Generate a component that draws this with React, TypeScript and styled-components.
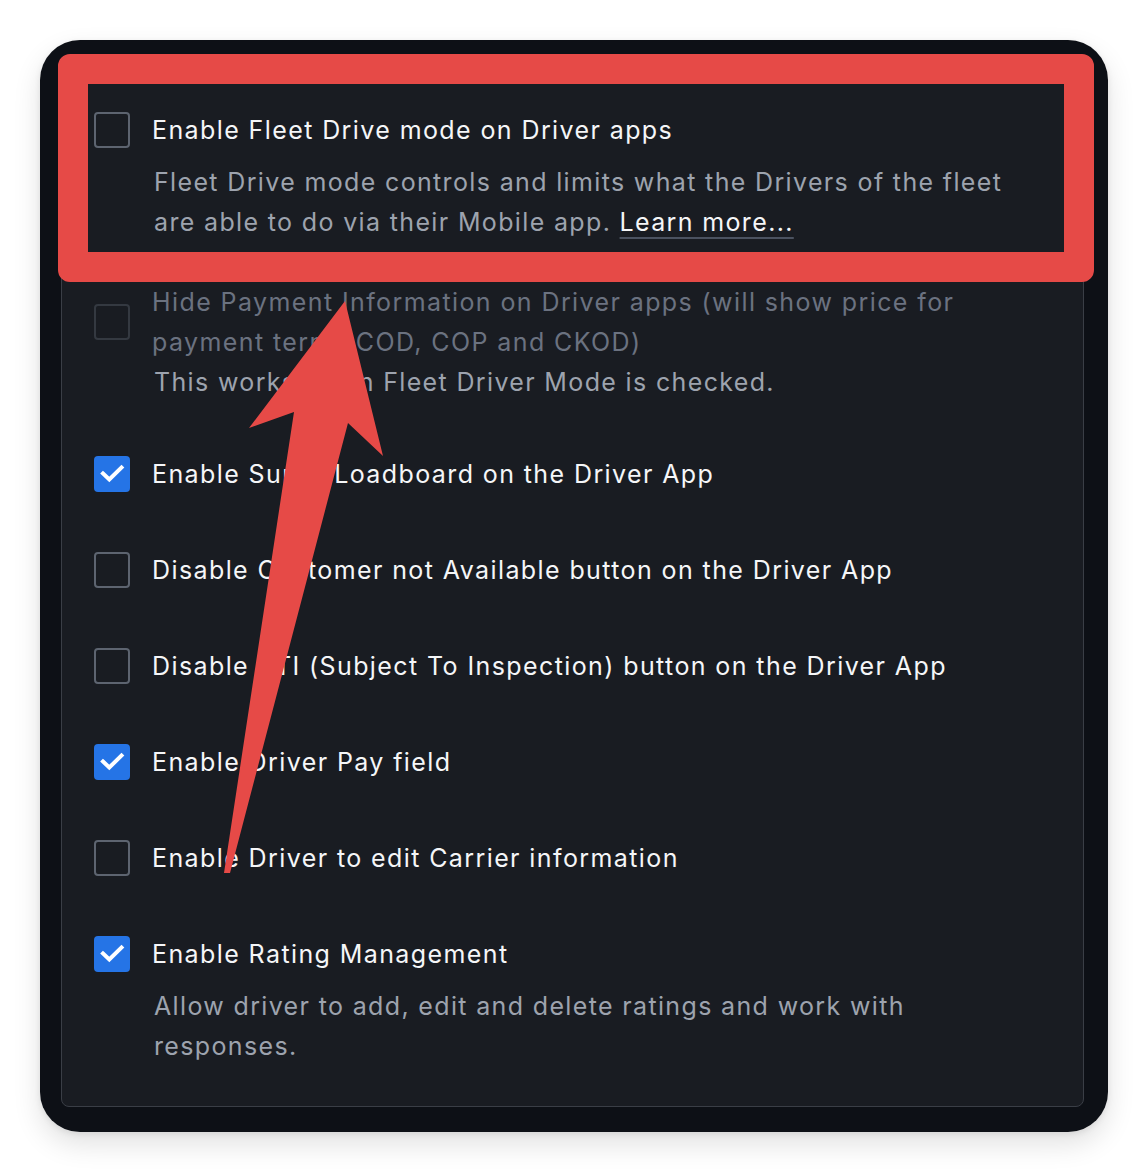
import React from "react"
import styled, { createGlobalStyle } from "styled-components"

const GlobalStyle = createGlobalStyle`
  html, body {
    margin: 0;
    padding: 0;
    background: #ffffff;
  }
  body {
    font-family: Inter, "Noto Sans", "Liberation Sans", sans-serif;
    -webkit-font-smoothing: antialiased;
  }
`

const Page = styled.div`
  padding: 40px 0 40px 40px;
`

const Frame = styled.div`
  position: relative;
  width: 1068px;
  box-sizing: border-box;
  padding: 22px 24px 25px 21px;
  background: #0d1016;
  border-radius: 40px;
  box-shadow: 0 12px 28px rgba(0, 0, 0, 0.12), 0 2px 6px rgba(0, 0, 0, 0.08);
`

const Panel = styled.div`
  display: flex;
  flex-direction: column;
  padding: 47px 32px 40px 32px;
  background: #191c22;
  border: 1px solid #3a3e46;
  border-radius: 8px;
`

const Row = styled.div<{ $gap: number }>`
  display: flex;
  flex-direction: column;
  margin-top: ${(p) => p.$gap}px;
`

const Header = styled.div`
  display: flex;
  align-items: center;
  gap: 22px;
`

const Box = styled.div<{ $checked?: boolean; $disabled?: boolean }>`
  flex-shrink: 0;
  width: 36px;
  height: 36px;
  box-sizing: border-box;
  border-radius: 4px;
  display: flex;
  align-items: center;
  justify-content: center;
  background: ${(p) => (p.$checked ? "#2574e6" : "transparent")};
  border: ${(p) =>
    p.$checked ? "none" : p.$disabled ? "2px solid #343941" : "2px solid #5d6470"};
  svg {
    display: block;
  }
`

const Label = styled.div<{ $disabled?: boolean }>`
  font-size: 25px;
  line-height: 40px;
  letter-spacing: 1.4px;
  color: ${(p) => (p.$disabled ? "#6b7280" : "#f5f6f8")};
  max-width: 830px;
`

const Description = styled.div<{ $gap: number }>`
  margin-top: ${(p) => p.$gap}px;
  padding-left: 60px;
  font-size: 25px;
  line-height: 40px;
  letter-spacing: 1.35px;
  color: #9da3ae;
  max-width: 870px;
`

const LearnMore = styled.a`
  color: #f5f6f8;
  text-decoration: underline;
  text-decoration-color: #4b5260;
  text-decoration-thickness: 2px;
  text-underline-offset: 6px;
`

const Highlight = styled.div`
  position: absolute;
  left: 18px;
  top: 14px;
  width: 1036px;
  height: 228px;
  box-sizing: border-box;
  border: 30px solid #e64a47;
  border-radius: 12px;
  pointer-events: none;
`

const ArrowSvg = styled.svg`
  position: absolute;
  left: 0;
  top: 0;
  pointer-events: none;
`

type Option = {
  label: string
  checked?: boolean
  disabled?: boolean
  description?: React.ReactNode
  descGap?: number
  gap: number
}

const options: Option[] = [
  {
    label: "Enable Fleet Drive mode on Driver apps",
    gap: 0,
    descGap: 12,
    description: (
      <>
        Fleet Drive mode controls and limits what the Drivers of the fleet are able to do via
        their Mobile app. <LearnMore href="#">Learn more...</LearnMore>
      </>
    ),
  },
  {
    label: "Hide Payment Information on Driver apps (will show price for payment terms COD, COP and CKOD)",
    disabled: true,
    gap: 40,
    descGap: 0,
    description: "This works when Fleet Driver Mode is checked.",
  },
  { label: "Enable Super Loadboard on the Driver App", checked: true, gap: 52 },
  { label: "Disable Customer not Available button on the Driver App", gap: 56 },
  { label: "Disable STI (Subject To Inspection) button on the Driver App", gap: 56 },
  { label: "Enable Driver Pay field", checked: true, gap: 56 },
  { label: "Enable Driver to edit Carrier information", gap: 56 },
  {
    label: "Enable Rating Management",
    checked: true,
    gap: 56,
    descGap: 12,
    description: "Allow driver to add, edit and delete ratings and work with responses.",
  },
]

const CheckMark = () => (
  <svg width="36" height="36" viewBox="0 0 36 36" fill="none">
    <path
      d="M9 17.5L15.3 23.5L27.5 11.5"
      stroke="#ffffff"
      strokeWidth="4"
      strokeLinecap="square"
      strokeLinejoin="miter"
    />
  </svg>
)

const Arrow = () => (
  <ArrowSvg width="1068" height="1092" viewBox="40 40 1068 1092">
    <polygon
      points="345,301 383,456 348,423 230,873 224,873 294,412 249,428"
      fill="#e64a47"
    />
  </ArrowSvg>
)

export default function App() {
  return (
    <>
      <GlobalStyle />
      <Page>
        <Frame>
          <Panel>
            {options.map((opt) => (
              <Row key={opt.label} $gap={opt.gap}>
                <Header>
                  <Box $checked={opt.checked} $disabled={opt.disabled}>
                    {opt.checked && <CheckMark />}
                  </Box>
                  <Label $disabled={opt.disabled}>{opt.label}</Label>
                </Header>
                {opt.description && (
                  <Description $gap={opt.descGap ?? 12}>{opt.description}</Description>
                )}
              </Row>
            ))}
          </Panel>
          <Highlight />
          <Arrow />
        </Frame>
      </Page>
    </>
  )
}
